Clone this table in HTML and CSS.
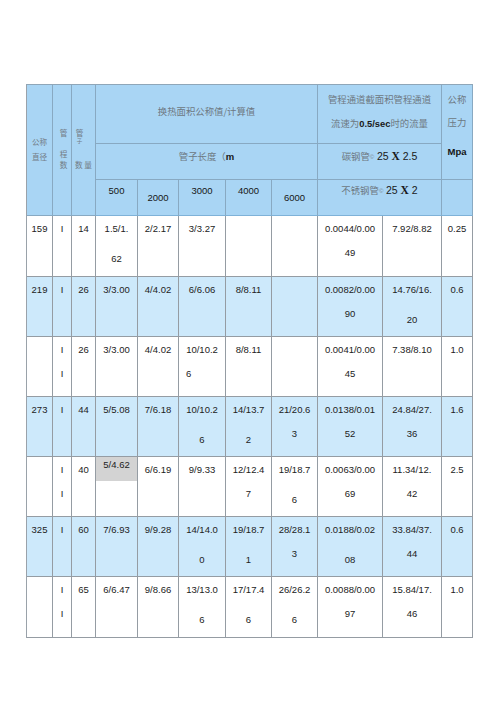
FILE: index.html
```html
<!DOCTYPE html>
<html lang="zh">
<head>
<meta charset="utf-8">
<title>换热面积表</title>
<link rel="stylesheet" href="styles.css">
</head>
<body>
<div class="page">
  <div class="grid">
    <!-- header row 1 -->
    <div class="c h rs3 hc1"><div class="small">公称</div><div class="small">直径</div></div>
    <div class="c h rs3 hc2"><div class="small">管</div><div class="small g1">程</div><div class="small">数</div></div>
    <div class="c h rs3 hc3"><div class="small">管</div><div class="tiny">子</div><div class="small g2">数 量</div></div>
    <div class="c h cs5 hbig"><span class="cn">换热面积公称值/计算值</span></div>
    <div class="c h cs2 hflow"><div class="cn">管程通道截面积管程通道</div><div class="cn g3">流速为<b class="en">0.5/sec</b>时的流量</div></div>
    <div class="c h rs2 hpress"><div class="cn">公称</div><div class="cn g4">压力</div><div class="en b g5">Mpa</div></div>
    <!-- header row 2 -->
    <div class="c h cs5 hr2"><span class="cn">管子长度（</span><b class="en">m</b></div>
    <div class="c h cs2 hr2"><span class="cn">碳钢管</span><span class="cp">©</span> <b class="en big">25 <span class="x">X</span> 2.5</b></div>
    <!-- header row 3 -->
    <div class="c h hr3 en">500</div>
    <div class="c h hr3 low en">2000</div>
    <div class="c h hr3 en">3000</div>
    <div class="c h hr3 en">4000</div>
    <div class="c h hr3 low en">6000</div>
    <div class="c h cs2 hr3 hs"><span class="cn">不锈钢管</span><span class="cp">©</span> <b class="en big">25 <span class="x">X</span> 2</b></div>
    <div class="c h hr3"></div>

    <!-- row 159 -->
    <div class="c d">159</div>
    <div class="c d">I</div>
    <div class="c d">14</div>
    <div class="c d"><div>1.5/1.</div><div class="lb">62</div></div>
    <div class="c d">2/2.17</div>
    <div class="c d">3/3.27</div>
    <div class="c d"></div>
    <div class="c d"></div>
    <div class="c d"><div>0.0044/0.00</div><div class="la">49</div></div>
    <div class="c d">7.92/8.82</div>
    <div class="c d">0.25</div>

    <!-- row 219 -->
    <div class="c d blue">219</div>
    <div class="c d blue">I</div>
    <div class="c d blue">26</div>
    <div class="c d blue">3/3.00</div>
    <div class="c d blue">4/4.02</div>
    <div class="c d blue">6/6.06</div>
    <div class="c d blue">8/8.11</div>
    <div class="c d blue"></div>
    <div class="c d blue"><div>0.0082/0.00</div><div class="la">90</div></div>
    <div class="c d blue"><div>14.76/16.</div><div class="lb">20</div></div>
    <div class="c d blue">0.6</div>

    <!-- row II 26 -->
    <div class="c d"></div>
    <div class="c d"><div>I</div><div class="la">I</div></div>
    <div class="c d">26</div>
    <div class="c d">3/3.00</div>
    <div class="c d">4/4.02</div>
    <div class="c d"><div>10/10.2</div><div class="la left">6</div></div>
    <div class="c d">8/8.11</div>
    <div class="c d"></div>
    <div class="c d"><div>0.0041/0.00</div><div class="la">45</div></div>
    <div class="c d">7.38/8.10</div>
    <div class="c d">1.0</div>

    <!-- row 273 -->
    <div class="c d blue">273</div>
    <div class="c d blue">I</div>
    <div class="c d blue">44</div>
    <div class="c d blue">5/5.08</div>
    <div class="c d blue">7/6.18</div>
    <div class="c d blue"><div>10/10.2</div><div class="lb">6</div></div>
    <div class="c d blue"><div>14/13.7</div><div class="lb">2</div></div>
    <div class="c d blue"><div>21/20.6</div><div class="la">3</div></div>
    <div class="c d blue"><div>0.0138/0.01</div><div class="la">52</div></div>
    <div class="c d blue"><div>24.84/27.</div><div class="la">36</div></div>
    <div class="c d blue">1.6</div>

    <!-- row II 40 -->
    <div class="c d"></div>
    <div class="c d"><div>I</div><div class="la">I</div></div>
    <div class="c d">40</div>
    <div class="c d nopad"><div class="grey">5/4.62</div></div>
    <div class="c d">6/6.19</div>
    <div class="c d">9/9.33</div>
    <div class="c d"><div>12/12.4</div><div class="la">7</div></div>
    <div class="c d"><div>19/18.7</div><div class="lb">6</div></div>
    <div class="c d"><div>0.0063/0.00</div><div class="la">69</div></div>
    <div class="c d"><div>11.34/12.</div><div class="la">42</div></div>
    <div class="c d">2.5</div>

    <!-- row 325 -->
    <div class="c d blue">325</div>
    <div class="c d blue">I</div>
    <div class="c d blue">60</div>
    <div class="c d blue">7/6.93</div>
    <div class="c d blue">9/9.28</div>
    <div class="c d blue"><div>14/14.0</div><div class="lb">0</div></div>
    <div class="c d blue"><div>19/18.7</div><div class="lb">1</div></div>
    <div class="c d blue"><div>28/28.1</div><div class="la">3</div></div>
    <div class="c d blue"><div>0.0188/0.02</div><div class="lb">08</div></div>
    <div class="c d blue"><div>33.84/37.</div><div class="la">44</div></div>
    <div class="c d blue">0.6</div>

    <!-- row II 65 -->
    <div class="c d"></div>
    <div class="c d"><div>I</div><div class="la">I</div></div>
    <div class="c d">65</div>
    <div class="c d">6/6.47</div>
    <div class="c d">9/8.66</div>
    <div class="c d"><div>13/13.0</div><div class="lb">6</div></div>
    <div class="c d"><div>17/17.4</div><div class="lb">6</div></div>
    <div class="c d"><div>26/26.2</div><div class="lb">6</div></div>
    <div class="c d"><div>0.0088/0.00</div><div class="la">97</div></div>
    <div class="c d"><div>15.84/17.</div><div class="la">46</div></div>
    <div class="c d">1.0</div>
  </div>
</div>
</body>
</html>
```
FILE: styles.css
```css
html, body {
  margin: 0;
  padding: 0;
  background: #ffffff;
}

.page {
  padding: 84px 0 0 26px;
}

.grid {
  display: grid;
  grid-template-columns: 26px 19px 24px 42px 41px 47px 46px 46px 65px 59px 31px;
  grid-template-rows: 59px 36px 36px 61px 60px 60px 60px 60px 60px 61px;
  width: max-content;
  border-top: 1px solid #8fa6b8;
  border-left: 1px solid #9aa2aa;
  font-family: "Liberation Sans", Arial, sans-serif;
  font-size: 9.5px;
  color: #222222;
}

.c {
  box-sizing: border-box;
  border-right: 1px solid #959ca3;
  border-bottom: 1px solid #959ca3;
  text-align: center;
  line-height: 14px;
  overflow: visible;
  white-space: nowrap;
}

.rs3 { grid-row: span 3; }
.rs2 { grid-row: span 2; }
.cs5 { grid-column: span 5; }
.cs2 { grid-column: span 2; }

/* header */
.h {
  background: #a9d5f4;
  border-color: #88a9c2;
  color: #111;
}

.cn {
  font-family: "Noto Sans CJK SC", "Liberation Sans", sans-serif;
  font-size: 9.4px;
  color: #6d7882;
  font-weight: 400;
}

.en {
  font-family: "Liberation Sans", Arial, sans-serif;
  color: #161616;
}

.b { font-weight: 700; }

.big { font-size: 10.5px; font-weight: 400; color: #1a1a1a; }

.x {
  font-family: "Liberation Serif", "Times New Roman", serif;
  font-weight: 700;
  font-size: 11.5px;
}

.cp {
  font-family: "Liberation Sans", Arial, sans-serif;
  font-size: 6px;
  color: #7a8690;
  vertical-align: 1px;
}

.small {
  font-family: "Noto Sans CJK SC", sans-serif;
  font-size: 7.6px;
  color: #727c86;
  line-height: 11px;
}

.tiny {
  font-family: "Noto Sans CJK SC", sans-serif;
  font-size: 5.5px;
  color: #727c86;
  line-height: 7px;
}

.hc1 { padding-top: 49px; }
.hc1 .small { line-height: 15px; }
.hc2 { padding-top: 42px; padding-left: 3px; }
.hc2 .g1 { margin-top: 10px; }
.hc3 { padding-top: 42px; }
.hc3 > .small:first-child { padding-right: 8px; }
.hc3 .tiny { padding-right: 8px; }
.hc3 .g2 { margin-top: 14px; }

.hbig { padding-top: 19px; }
.hflow { padding-top: 7px; }
.hflow .g3 { margin-top: 10px; }
.hflow .g3 b { color: #1a1a1a; }
.hpress { padding-top: 7px; }
.hpress .g4 { margin-top: 9px; }
.hpress .g5 { margin-top: 16px; }

.hr2 { padding-top: 5px; }
.hr3 { padding-top: 4px; }
.hr3.low { padding-top: 11px; }
.hr3.hs { padding-top: 3px; }
.hr3 { border-bottom-color: #7fb2d8; }

/* data */
.d {
  padding-top: 6px;
  background: #ffffff;
}

.d.blue {
  background: #cde9fb;
}

.la { margin-top: 10px; }
.lb { margin-top: 16px; }
.left { text-align: left; padding-left: 7px; }

.nopad { padding-top: 0; }

.grey {
  background: #d3d3d3;
  height: 24px;
  box-sizing: border-box;
  padding-top: 1px;
  line-height: 14px;
}
```
